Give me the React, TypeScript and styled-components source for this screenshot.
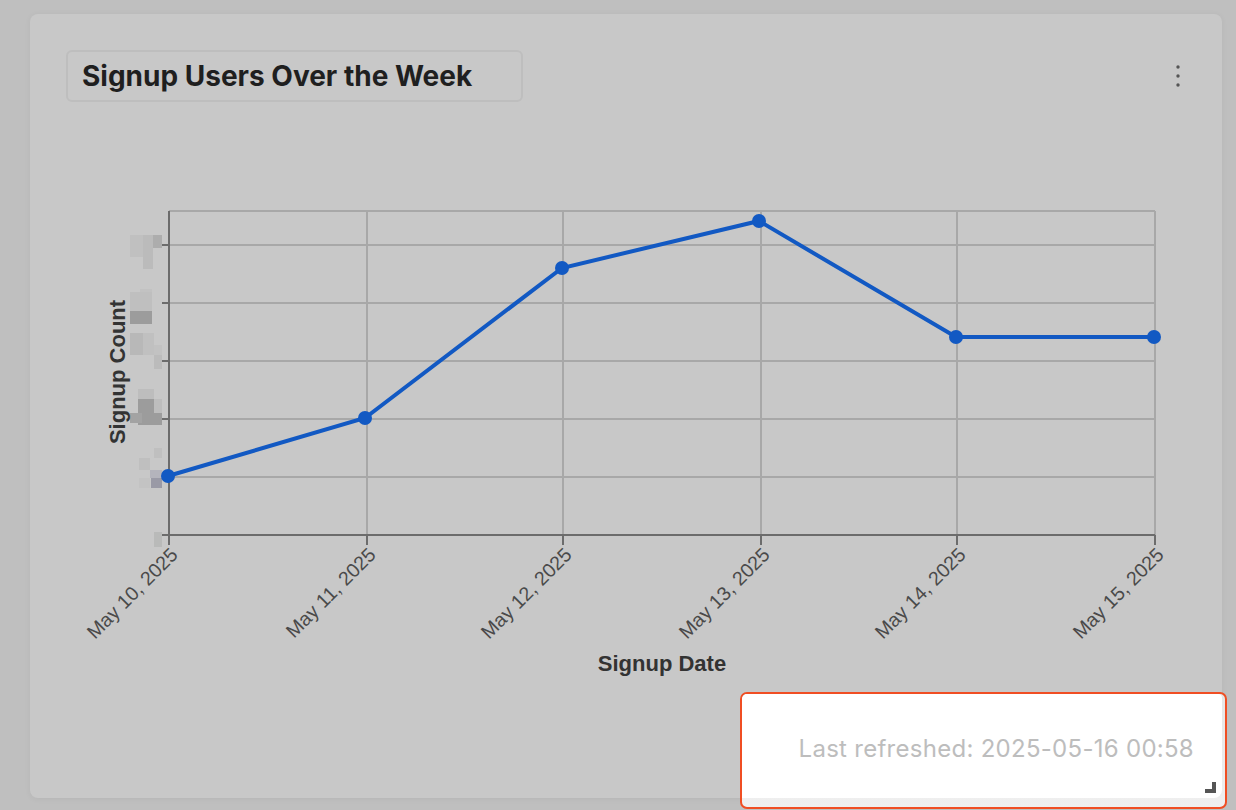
import React from 'react';
import styled, { createGlobalStyle } from 'styled-components';

const GlobalStyle = createGlobalStyle`
  html, body {
    margin: 0;
    padding: 0;
    height: 810px;
    overflow: hidden;
    background: #bfbfbf;
    font-family: Inter, "Liberation Sans", sans-serif;
  }
`;

const Page = styled.div`
  position: relative;
  width: 1236px;
  height: 810px;
  box-sizing: border-box;
  padding: 14px 14px 12px 30px;
`;

const Card = styled.section`
  height: 100%;
  box-sizing: border-box;
  padding: 36px 36px 0;
  background: #c8c8c8;
  border-radius: 8px;
  box-shadow: 0 1px 6px rgba(0, 0, 0, 0.05);
`;

const CardHeader = styled.header`
  display: flex;
  align-items: center;
  justify-content: space-between;
`;

const TitleBox = styled.div`
  width: 457px;
  height: 52px;
  box-sizing: border-box;
  padding-left: 14px;
  display: flex;
  align-items: center;
  border: 2px solid #bebebe;
  border-radius: 6px;
  font-size: 28px;
  font-weight: 700;
  color: #1f1f1f;
  white-space: nowrap;
`;

const MenuButton = styled.button`
  width: 16px;
  height: 32px;
  padding: 0;
  border: 0;
  background: none;
  display: flex;
  align-items: center;
  justify-content: center;
`;

const ChartSvg = styled.svg`
  display: block;
  margin-top: 88px;
`;

const TickLabel = styled.text`
  font-family: "Liberation Sans", Arial, sans-serif;
  font-size: 19.6px;
  fill: #4a4a4a;
  text-anchor: end;
`;

const AxisTitle = styled.text`
  font-family: "Liberation Sans", Arial, sans-serif;
  font-size: 22px;
  font-weight: 700;
  fill: #333333;
  text-anchor: middle;
`;

const Highlight = styled.div`
  position: absolute;
  left: 740px;
  top: 692px;
  width: 487px;
  height: 117px;
  box-sizing: border-box;
  border: 2px solid #f04e23;
  border-radius: 7px;
  background: linear-gradient(#e6e6e6, #efefef);
  overflow: hidden;
`;

const HighlightPanel = styled.div`
  position: relative;
  height: 104px;
  margin-right: 3px;
  box-sizing: border-box;
  padding: 41px 28px 0 0;
  background: #ffffff;
  border-radius: 0 4px 8px 0;
  text-align: right;
`;

const RefreshedText = styled.span`
  font-size: 24px;
  line-height: 28px;
  letter-spacing: 0.28px;
  color: #bdbdbd;
  white-space: nowrap;
`;

const ResizeHandle = styled.svg`
  position: absolute;
  right: 6px;
  bottom: 5px;
`;

const gridY = [245, 303, 361, 419, 477];
const gridX = [367, 563, 761, 957, 1155];
const ticksX = [169, 367, 563, 761, 957, 1155];

const points: [number, number][] = [
  [168, 476],
  [365, 418],
  [562, 268],
  [759, 221],
  [956, 337],
  [1154, 337],
];

const dates = [
  'May 10, 2025',
  'May 11, 2025',
  'May 12, 2025',
  'May 13, 2025',
  'May 14, 2025',
  'May 15, 2025',
];

// pixelated blobs where the y axis numbers were censored
const mosaic: [number, number, number, number, string][] = [
  [130, 235, 13, 22, '#c0c0c0'],
  [143, 235, 10, 34, '#bbbbbb'],
  [153, 235, 9, 13, '#adadad'],
  [140, 289, 12, 3, '#c2c2c2'],
  [130, 292, 22, 19, '#bfbfbf'],
  [130, 311, 22, 13, '#9c9c9c'],
  [130, 333, 13, 22, '#b8b8b8'],
  [143, 333, 11, 22, '#c0c0c0'],
  [154, 345, 8, 10, '#c2c2c2'],
  [154, 355, 8, 14, '#bbbbbb'],
  [138, 389, 16, 10, '#bdbdbd'],
  [138, 399, 16, 26, '#9c9c9c'],
  [154, 399, 8, 14, '#bdbdbd'],
  [154, 413, 8, 12, '#9c9c9c'],
  [130, 413, 12, 10, '#a3a3a3'],
  [154, 448, 8, 10, '#bfbfbf'],
  [139, 458, 11, 12, '#bfbfbf'],
  [150, 470, 12, 8, '#b4b4bc'],
  [139, 478, 11, 10, '#c3c3c3'],
  [151, 478, 11, 10, '#9a9aa6'],
  [154, 532, 8, 15, '#b9bab9'],
];

const Chart = () => (
  <ChartSvg width={1120} height={490} viewBox="66 190 1120 490">
    {mosaic.map(([x, y, w, h, fill]) => (
      <rect key={`${x}-${y}`} x={x} y={y} width={w} height={h} fill={fill} />
    ))}
    <g stroke="#a8a8a8" strokeWidth={2}>
      <line x1={169} x2={1155} y1={211} y2={211} />
      {gridY.map(y => (
        <line key={y} x1={169} x2={1155} y1={y} y2={y} />
      ))}
      {gridX.map(x => (
        <line key={x} x1={x} x2={x} y1={211} y2={535} />
      ))}
    </g>
    <g stroke="#6c6c6c" strokeWidth={2}>
      <line x1={169} x2={169} y1={211} y2={545} />
      <line x1={162} x2={1155} y1={535} y2={535} />
      {gridY.map(y => (
        <line key={y} x1={162} x2={169} y1={y} y2={y} />
      ))}
      {ticksX.map(x => (
        <line key={x} x1={x} x2={x} y1={535} y2={545} />
      ))}
    </g>
    <polyline
      points={points.map(p => p.join(',')).join(' ')}
      fill="none"
      stroke="#1259c3"
      strokeWidth={4}
    />
    {points.map(([x, y]) => (
      <circle key={x} cx={x} cy={y} r={7} fill="#1259c3" />
    ))}
    {dates.map((d, i) => (
      <TickLabel
        key={d}
        transform={`translate(${ticksX[i] + 10} ${556}) rotate(-45)`}
      >
        {d}
      </TickLabel>
    ))}
    <AxisTitle x={662} y={671}>
      Signup Date
    </AxisTitle>
    <AxisTitle transform="translate(125 372) rotate(-90)">Signup Count</AxisTitle>
  </ChartSvg>
);

const App = () => (
  <Page>
    <GlobalStyle />
    <Card>
      <CardHeader>
        <TitleBox>Signup Users Over the Week</TitleBox>
        <MenuButton aria-label="More">
          <svg width="6" height="24" viewBox="0 0 6 24" fill="#555555">
            <circle cx="3" cy="3" r="1.7" />
            <circle cx="3" cy="12" r="1.7" />
            <circle cx="3" cy="21" r="1.7" />
          </svg>
        </MenuButton>
      </CardHeader>
      <Chart />
    </Card>
    <Highlight>
      <HighlightPanel>
        <RefreshedText>Last refreshed: 2025-05-16 00:58</RefreshedText>
        <ResizeHandle width="12" height="12" viewBox="0 0 12 12" fill="#555555">
          <path d="M8 1h4v11H1V8h7z" />
        </ResizeHandle>
      </HighlightPanel>
    </Highlight>
  </Page>
);

export default App;
